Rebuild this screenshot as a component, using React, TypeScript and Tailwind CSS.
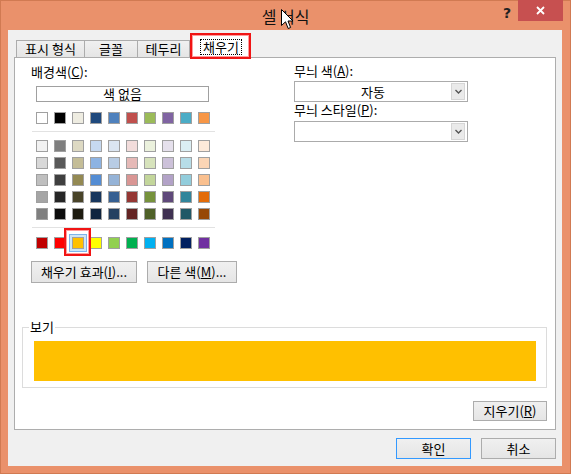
import React from "react";

const themeRow = ["#FFFFFF", "#000000", "#EEECE1", "#1F497D", "#4F81BD", "#C0504D", "#9BBB59", "#8064A2", "#4BACC6", "#F79646"];

const tintRows = [
  ["#F2F2F2", "#7F7F7F", "#DDD9C3", "#C6D9F0", "#DBE5F1", "#F2DCDB", "#EBF1DD", "#E5E0EC", "#DBEEF3", "#FDEADA"],
  ["#D8D8D8", "#595959", "#C4BD97", "#8DB3E2", "#B8CCE4", "#E5B9B7", "#D7E3BC", "#CCC1D9", "#B7DDE8", "#FBD5B5"],
  ["#BFBFBF", "#3F3F3F", "#938953", "#548DD4", "#95B3D7", "#D99694", "#C3D69B", "#B2A2C7", "#92CDDC", "#FAC08F"],
  ["#A5A5A5", "#262626", "#494429", "#17365D", "#366092", "#953734", "#76923C", "#5F497A", "#31859B", "#E36C09"],
  ["#7F7F7F", "#0C0C0C", "#1D1B10", "#0F243E", "#244061", "#632423", "#4F6128", "#3F3151", "#205867", "#974806"],
];

const standardRow = ["#C00000", "#FF0000", "#FFC000", "#FFFF00", "#92D050", "#00B050", "#00B0F0", "#0070C0", "#002060", "#7030A0"];

const font = "font-['Noto_Sans_CJK_KR','Noto_Sans',sans-serif]";

function Swatch({ color }: { color: string }) {
  return <div className="h-[12px] w-[12px] border border-[#A0A0A0]" style={{ backgroundColor: color }} />;
}

function SwatchRow({ colors }: { colors: string[] }) {
  return (
    <div className="flex gap-[6px] pl-[5px]">
      {colors.map((c, i) => (
        <Swatch key={i} color={c} />
      ))}
    </div>
  );
}

function Button({ children, className = "" }: { children: React.ReactNode; className?: string }) {
  return (
    <div
      className={`flex items-center justify-center border border-[#ACACAC] bg-gradient-to-b from-[#F0F0F0] to-[#E5E5E5] text-[13px] leading-[16px] text-black whitespace-nowrap ${className}`}
    >
      {children}
    </div>
  );
}

function Dropdown({ value }: { value?: string }) {
  return (
    <div className="flex h-[21px] w-[174px] items-center border border-[#ABABAB] bg-white pr-[2px]">
      <div className="flex-1 text-center text-[13px] leading-[16px]">{value}</div>
      <div className="flex h-[17px] w-[14px] items-center justify-center border border-[#D6D6D6] bg-[#EAEAEA]">
        <svg width="7" height="5" viewBox="0 0 7 5">
          <path d="M0.5 1 L3.5 4 L6.5 1" fill="none" stroke="#555" strokeWidth="1.4" />
        </svg>
      </div>
    </div>
  );
}

function Tab({ label, width }: { label: string; width: string }) {
  return (
    <div
      className={`-ml-px mb-px flex h-[17px] ${width} items-center justify-center border border-b-0 border-[#ACACAC] bg-gradient-to-b from-[#F0F0F0] to-[#E5E5E5] text-[13px] leading-[16px] first:ml-0`}
    >
      {label}
    </div>
  );
}

export default function App() {
  return (
    <div className={`${font} flex h-[474px] w-[571px] flex-col border border-[#D17A52] bg-[#EA916B] text-black`}>
      {/* title bar */}
      <div className="relative flex h-[29px] shrink-0 items-center justify-center">
        <span className="text-[16px] leading-[20px] text-[#111]">셀 서식</span>
        <svg className="absolute left-[280px] top-[8px]" width="13" height="21" viewBox="0 0 13 21">
          <path d="M0.5 0.5 L0.5 16.5 L4.5 12.8 L7.2 19.5 L9.6 18.5 L7 12 L12 12 Z" fill="#fff" stroke="#000" strokeWidth="1" />
        </svg>
        <span className="absolute left-[502px] top-[4px] text-[14px] font-bold leading-[16px] text-[#222] font-['DejaVu_Sans',sans-serif]">
          ?
        </span>
        <div className="absolute right-[7px] top-[-1px] flex h-[21px] w-[45px] items-center justify-center bg-[#C75050]">
          <svg width="9" height="9" viewBox="0 0 9 9">
            <path d="M1 1 L8 8 M8 1 L1 8" stroke="#fff" strokeWidth="1.8" />
          </svg>
        </div>
      </div>

      {/* client */}
      <div className="ml-[7px] mr-[8px] mb-[7px] flex h-[436px] flex-col bg-[#F0F0F0] px-[6px] pt-[5px]">
        {/* tabs */}
        <div className="-mb-px ml-[2px] flex h-[23px] items-end">
          <Tab label="표시 형식" width="w-[69px]" />
          <Tab label="글꼴" width="w-[54px]" />
          <Tab label="테두리" width="w-[53px]" />
          <div className="relative z-10 ml-[2px] flex h-[23px] w-[58px] items-center justify-center border border-b-0 border-[#ACACAC] bg-white">
            <span className="border border-dotted border-black px-[2px] text-[13px] leading-[14px]">채우기</span>
            <div className="absolute -bottom-[1px] -left-[3px] -right-[2px] -top-[3px] border-2 border-[#F01414] shadow-[inset_0_0_0_1px_#FF9C9C]" />
          </div>
        </div>

        {/* panel */}
        <div className="flex h-[373px] flex-col border border-[#ADADAD] bg-white">
          <div className="flex">
            {/* left column */}
            <div className="ml-[16px] w-[185px] shrink-0 pt-[6px]">
              <div className="text-[13px] leading-[16px]">
                배경색(<span className="underline">C</span>):
              </div>
              <div className="ml-[5px] mt-[6px] flex h-[16px] w-[173px] items-center justify-center border border-[#A0A0A0] text-[13px] leading-[14px]">
                색 없음
              </div>
              <div className="mt-[10px]">
                <SwatchRow colors={themeRow} />
              </div>
              <div className="ml-[1px] mt-[7px] h-px w-[183px] bg-[#E2E2E2]" />
              <div className="mt-[8px] flex flex-col gap-[5px]">
                {tintRows.map((row, i) => (
                  <SwatchRow key={i} colors={row} />
                ))}
              </div>
              <div className="ml-[1px] mt-[7px] h-px w-[183px] bg-[#E2E2E2]" />
              <div className="mt-[9px] flex gap-[6px] pl-[5px]">
                {standardRow.map((c, i) =>
                  i === 2 ? (
                    <div key={i} className="relative h-[12px] w-[12px]">
                      <div className="absolute -inset-[3px] border border-[#7EB4EA] bg-[#CDE6F7]" />
                      <div className="absolute -bottom-[7px] -left-[8px] -right-[7px] -top-[9px] border-2 border-[#F01414] shadow-[inset_0_0_0_1px_#FF9C9C]" />
                      <div className="relative">
                        <Swatch color={c} />
                      </div>
                    </div>
                  ) : (
                    <Swatch key={i} color={c} />
                  )
                )}
              </div>
              <div className="mt-[12px] flex w-max gap-[10px]">
                <Button className="h-[22px] w-[106px]">
                  채우기 효과(<span className="underline">I</span>)...
                </Button>
                <Button className="h-[22px] w-[90px]">
                  다른 색(<span className="underline">M</span>)...
                </Button>
              </div>
            </div>

            {/* right column */}
            <div className="ml-[78px] w-[174px] pt-[5px]">
              <div className="text-[13px] leading-[16px]">
                무늬 색(<span className="underline">A</span>):
              </div>
              <div className="mt-[2px]">
                <Dropdown value="자동" />
              </div>
              <div className="text-[13px] leading-[16px]">
                무늬 스타일(<span className="underline">P</span>):
              </div>
              <div className="mt-[3px]">
                <Dropdown />
              </div>
            </div>
          </div>

          {/* preview */}
          <fieldset className="ml-[7px] mr-[8px] mt-[36px] border border-[#DCDCDC] pb-[6px] pt-[6px]">
            <legend className="ml-[6px] px-[1px] text-[13px] leading-[16px]">보기</legend>
            <div className="ml-[11px] mr-[10px] h-[40px] bg-[#FFC000]" />
          </fieldset>

          <div className="mr-[8px] mt-[13px] self-end">
            <Button className="h-[20px] w-[74px]">
              지우기(<span className="underline">R</span>)
            </Button>
          </div>
        </div>

        {/* dialog buttons */}
        <div className="mt-[8px] flex justify-end gap-[10px]">
          <Button className="h-[21px] w-[75px] !border-[#3399FF]">확인</Button>
          <Button className="h-[21px] w-[75px]">취소</Button>
        </div>
      </div>
    </div>
  );
}
